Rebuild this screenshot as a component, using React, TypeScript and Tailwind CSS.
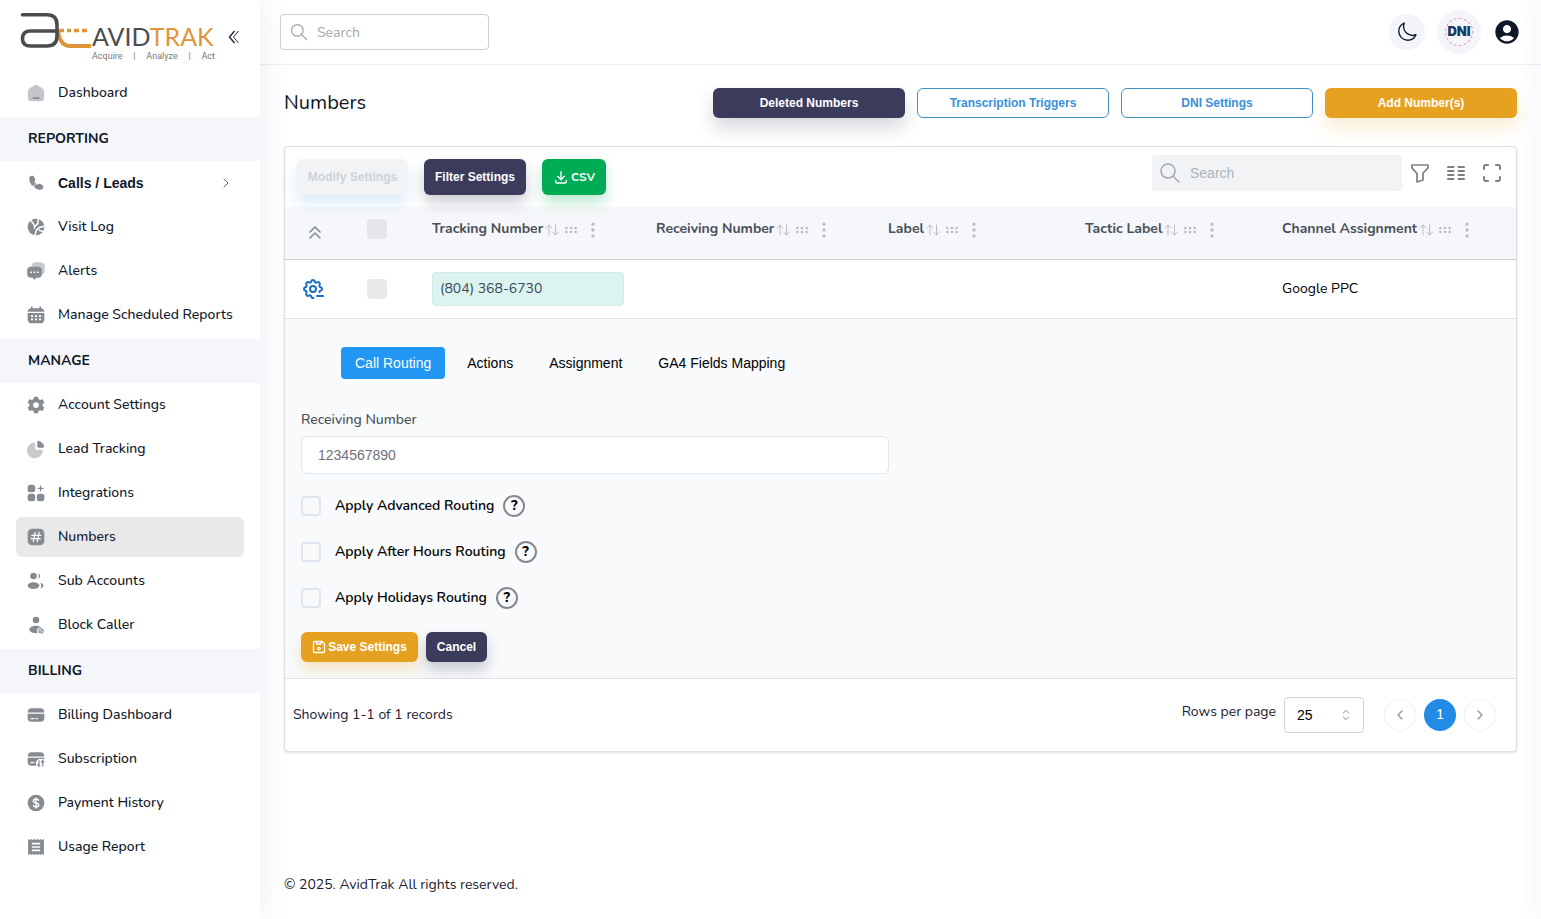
import type { ReactNode } from 'react';
import { HiOutlineMoon } from 'react-icons/hi2';
import { MdAccountCircle } from 'react-icons/md';
import {
  TbChevronLeft,
  TbChevronRight,
  TbChevronsUp,
  TbColumns,
  TbDotsVertical,
  TbDownload,
  TbFilter,
  TbGripHorizontal,
  TbMaximize,
  TbSearch,
  TbSelector,
  TbSettingsMinus,
} from 'react-icons/tb';

type NavItem = { label: string; icon: ReactNode; active?: boolean; expandable?: boolean };
type NavSection = { title?: string; items: NavItem[] };

function Glyph({ children }: { children: ReactNode }) {
  return (
    <svg viewBox="0 0 24 24" className="size-5 shrink-0 fill-[#868b91]" aria-hidden="true">
      {children}
    </svg>
  );
}

const sections: NavSection[] = [
  {
    items: [
      {
        label: 'Dashboard',
        icon: (
          <Glyph>
            <path fill="#c4c5ca" d="M10.4 2.6a3 3 0 0 1 3.2 0l6 3.8A4 4 0 0 1 21.800 9.800V18a4 4 0 0 1-4 4H6.200a4 4 0 0 1-4-4V9.800a4 4 0 0 1 2.200-3.400z" />
            <rect x="8" y="17.200" width="8.500" height="2" rx="1" />
          </Glyph>
        ),
      },
    ],
  },
  {
    title: 'REPORTING',
    items: [
      {
        label: 'Calls / Leads',
        expandable: true,
        icon: (
          <Glyph>
            <path fill="#b4b7bb" d="M7 12.500c1 2 2.800 3.700 5 4.800l2.600-2.600-4.500-4.500z" />
            <path d="M4.700 4.300C6.500 2.800 8.800 3 9.900 5l.9 1.900c.7 1.500.2 2.700-.8 3.700-.7.900-.5 2 .2 3L7.400 15.500C4.300 11.700 2.900 6.500 4.700 4.300z" />
            <path d="M11.500 18.200c3 2.100 6.500 2.700 8.300 1 1.600-1.700 1.500-3.600-.3-4.700l-2-1.200c-1.300-.7-2.600-.4-3.500.6-.8.800-1.600 1-2.500.7L9.300 16.300z" />
          </Glyph>
        ),
      },
      {
        label: 'Visit Log',
        icon: (
          <Glyph>
            <circle cx="12" cy="12" r="10" />
            <path d="M5.500 3.500l5.300 7.700 3.400-3.200.7-6M10.800 11.200l-1 2.500M22 11l-5.500 1.200-4 3.300-1.800 6.500M15 15l2.500 1.800 3.500.4" fill="none" stroke="#fff" strokeWidth="1.800" />
          </Glyph>
        ),
      },
      {
        label: 'Alerts',
        icon: (
          <Glyph>
            <rect x="6.500" y="1.500" width="16" height="15" rx="5" fill="#c8c9cd" />
            <path d="M6 7h8.500a4.500 4.500 0 0 1 4.500 4.500v4a4.500 4.500 0 0 1-4.500 4.500h-2l-2.200 2.500L8 20H6a4.500 4.500 0 0 1-4.500-4.500v-4A4.500 4.500 0 0 1 6 7z" />
            <path d="M5.200 13.500h2M9.300 13.500h2M13.400 13.500h2" stroke="#fff" strokeWidth="2" />
          </Glyph>
        ),
      },
      {
        label: 'Manage Scheduled Reports',
        icon: (
          <Glyph>
            <path d="M6 1.800h1.800v2h8.400v-2H18v2c2.400.2 3.800 1.700 4 4.200H2c.2-2.500 1.600-4 4-4.200zM2 9.500h20V17c0 3.300-1.700 5-5 5H7c-3.300 0-5-1.700-5-5z" />
            <path d="M6 13.300h2.500M10.800 13.300h2.500M15.600 13.300h2.500M6 17.300h2.500M10.800 17.300h2.500M15.600 17.300h2.500" stroke="#fff" strokeWidth="2" />
          </Glyph>
        ),
      },
    ],
  },
  {
    title: 'MANAGE',
    items: [
      {
        label: 'Account Settings',
        icon: (
          <Glyph>
            <path
              fillRule="evenodd"
              d="M9.700 2h4.600l.7 2.900 1.900 1.100 2.900-.9 2.200 4-2.100 2v2l2.100 2-2.200 4-2.900-.9-1.900 1.100-.7 2.700H9.700L9 19.300l-1.900-1.100-2.900.9-2.200-4 2.100-2v-2L2 9.100l2.200-4 2.900.9L9 4.900zM12 8.600a3.500 3.500 0 1 0 0 7 3.500 3.500 0 0 0 0-7z"
            />
          </Glyph>
        ),
      },
      {
        label: 'Lead Tracking',
        icon: (
          <Glyph>
            <path fill="#c8c9cd" d="M9 4.200c1.200-.3 2 .3 2 1.500V11c0 1.200.8 2 2 2h5.500c1.200 0 1.800.8 1.500 2A9.500 9.500 0 1 1 9 4.200z" />
            <path d="M13.500 4c0-1.300.9-2 2.100-1.700a9 9 0 0 1 6.100 6.200c.3 1.200-.4 2-1.600 2h-4.900c-1 0-1.700-.7-1.700-1.700z" />
          </Glyph>
        ),
      },
      {
        label: 'Integrations',
        icon: (
          <Glyph>
            <rect x="2" y="2" width="9" height="9" rx="3" />
            <rect x="2" y="13" width="9" height="9" rx="3" />
            <rect x="13" y="13" width="9" height="9" rx="3" />
            <path d="M17.500 3v7M14 6.500h7" stroke="#868b91" strokeWidth="1.500" />
          </Glyph>
        ),
      },
      {
        label: 'Numbers',
        active: true,
        icon: (
          <Glyph>
            <rect x="2" y="2" width="20" height="20" rx="5.500" />
            <path d="M11 6.500l-2.200 11M15.700 6.500l-2.200 11M7 10h11M6.200 14h11" fill="none" stroke="#fff" strokeWidth="1.400" strokeLinecap="round" />
          </Glyph>
        ),
      },
      {
        label: 'Sub Accounts',
        icon: (
          <Glyph>
            <circle cx="9" cy="6" r="4" />
            <ellipse cx="9" cy="17.500" rx="7" ry="4" />
            <path d="M14.500 2.600a3.600 3.600 0 0 1 0 6.800 7 7 0 0 0 0-6.800zM17.300 14c2.300.4 3.700 1.800 3.700 3.500s-1.400 3-3.700 3.500c1.300-2.200 1.300-4.800 0-7z" />
          </Glyph>
        ),
      },
      {
        label: 'Block Caller',
        icon: (
          <Glyph>
            <circle cx="12" cy="6" r="4" />
            <path d="M12 13c3 0 5.300 1 6.200 2.200a4 4 0 0 0-4.300 6.300c-5.500.8-9.900-1-9.900-4.000 0-2.500 3.500-4.500 8-4.500z" />
            <circle cx="18" cy="19" r="2.600" fill="none" stroke="#868b91" strokeWidth="1.300" />
            <path d="M16.500 20.500l3-3" stroke="#868b91" strokeWidth="1.300" />
          </Glyph>
        ),
      },
    ],
  },
  {
    title: 'BILLING',
    items: [
      {
        label: 'Billing Dashboard',
        icon: (
          <Glyph>
            <path d="M2 9c.2-3.500 1.500-5 5-5h10c3.500 0 4.800 1.500 5 5zM2 10.500h20V15c0 3.700-1.300 5-5 5H7c-3.700 0-5-1.300-5-5z" />
            <path d="M5.500 16.300H10M11.500 16.300H14" stroke="#fff" strokeWidth="1.500" />
          </Glyph>
        ),
      },
      {
        label: 'Subscription',
        icon: (
          <Glyph>
            <path d="M2 9c.2-3.500 1.500-5 5-5h10c3.500 0 4.800 1.500 5 5zM2 10.500h20v1.500h-7l-3 3v5H7c-3.700 0-5-1.300-5-5z" />
            <path d="M5.500 16.300H10" stroke="#fff" strokeWidth="1.500" />
            <path d="M15.500 13.500v7l-2-2M15.500 20.500l1.500-1.500M20 21v-7l-1.800 2M20 14l1.800 2" fill="none" stroke="#868b91" strokeWidth="1.500" />
          </Glyph>
        ),
      },
      {
        label: 'Payment History',
        icon: (
          <Glyph>
            <circle cx="12" cy="12" r="10" />
            <path d="M15.200 9.300c-.3-1.400-1.500-2.200-3.200-2.200-1.900 0-3.200 1-3.200 2.400 0 3.300 6.500 1.600 6.500 5 0 1.400-1.300 2.400-3.300 2.400-1.800 0-3-.8-3.300-2.300M12 5.300v13.400" fill="none" stroke="#fff" strokeWidth="1.700" />
          </Glyph>
        ),
      },
      {
        label: 'Usage Report',
        icon: (
          <Glyph>
            <path d="M2.500 2.500l1.900 1.200 1.900-1.200 1.900 1.200 1.900-1.200L12 3.700l1.900-1.200 1.900 1.200 1.900-1.200 1.900 1.200 1.900-1.200v19l-1.900-1.200-1.900 1.200-1.900-1.200-1.900 1.200-1.900-1.200-1.900 1.200-1.900-1.200-1.900 1.200-1.900-1.200-1.900 1.200z" />
            <path d="M7 8h10M7 12h10M7 16h10" stroke="#fff" strokeWidth="2" />
          </Glyph>
        ),
      },
    ],
  },
];

const columns = ['Tracking Number', 'Receiving Number', 'Label', 'Tactic Label', 'Channel Assignment'];
const tabs = ['Call Routing', 'Actions', 'Assignment', 'GA4 Fields Mapping'];
const routingOptions = ['Apply Advanced Routing', 'Apply After Hours Routing', 'Apply Holidays Routing'];

function Logo() {
  return (
    <div className="flex">
      <svg viewBox="0 0 72 38" className="h-[38px] w-[72px]" fill="none" aria-hidden="true">
        <path d="M38 18C39 28 42 34 50 34H71" stroke="#e0953a" strokeWidth="3.800" />
        <path d="M39 18.500H44M47 18.500H51M54 18.500H59M62 18.500H67" stroke="#e0953a" strokeWidth="3.500" />
        <path d="M2.500 2.800H27Q37 2.800 37 13V24Q37 34 27 34H10.500Q2.500 34 2.500 26.700Q2.500 19 10.500 19H36" stroke="#4c4c4e" strokeWidth="3.600" strokeLinecap="round" />
      </svg>
      <div className="w-[123px] pt-3">
        <div className="font-['Lato'] text-[25px] leading-6 text-[#4c4c4e]">
          AVID<span className="text-[#e0953a]">TRAK</span>
        </div>
        <div className="flex justify-between pt-1 font-['Roboto'] text-[9px] leading-2 text-[#77787b]">
          <span>Acquire</span>
          <span>|</span>
          <span>Analyze</span>
          <span>|</span>
          <span>Act</span>
        </div>
      </div>
    </div>
  );
}

function DoubleChevron() {
  return (
    <svg viewBox="0 0 12 14" className="h-3.5 w-3" fill="none" stroke="#2a2f45" aria-hidden="true">
      <path d="M6.500 1L1.500 7l5 6" strokeWidth="1.500" />
      <path d="M10.500 1L5.500 7l5 6" strokeWidth="1" />
    </svg>
  );
}

function SortArrows() {
  return (
    <svg viewBox="0 0 14 12" className="h-3 w-3.5" fill="none" stroke="currentColor" strokeLinecap="round" aria-hidden="true">
      <path d="M4 11V1M1 4l3-3 3 3M10.500 1v10M7.500 8l3 3 3-3" />
    </svg>
  );
}

function SaveIcon() {
  return (
    <svg viewBox="0 0 14 14" className="size-3.5" fill="none" stroke="currentColor" strokeWidth="1.300" aria-hidden="true">
      <path d="M1.500 2.500a1 1 0 0 1 1-1h7.700l2.300 2.300v7.700a1 1 0 0 1-1 1h-9a1 1 0 0 1-1-1z" />
      <path d="M4.500 1.500V4h4.500V1.500" />
      <circle cx="7" cy="8.500" r="1.200" />
    </svg>
  );
}

function Sidebar() {
  return (
    <aside className="z-10 w-[260px] shrink-0 bg-white shadow-[0_0_28px_rgba(82,63,145,0.1)]">
      <div className="flex h-[71px] items-start justify-between pt-3 pr-5 pl-5">
        <Logo />
        <button type="button" aria-label="Collapse menu" className="mt-[18px]">
          <DoubleChevron />
        </button>
      </div>
      <nav>
        {sections.map((section) => (
          <div key={section.title ?? 'main'}>
            {section.title && (
              <h2 className="flex h-11 items-center bg-[#f4f6fa] px-7 text-sm font-bold text-[#0f1729]">{section.title}</h2>
            )}
            <ul className="px-4 pt-0.5">
              {section.items.map((item) => (
                <li key={item.label} className="mb-1">
                  {item.expandable ? (
                    <button
                      type="button"
                      className="flex h-10 w-full items-center gap-3 rounded-md px-2.5 text-left font-['Liberation_Sans'] text-sm font-bold text-[#0f1729]"
                    >
                      {item.icon}
                      <span className="flex-1">{item.label}</span>
                      <TbChevronRight className="size-4 text-[#5c6270]" strokeWidth={1.5} />
                    </button>
                  ) : (
                    <a
                      href="#"
                      className={`flex h-10 items-center gap-3 rounded-md px-2.5 text-sm font-medium text-[#0f1729] ${item.active ? 'bg-[#e9e9e9]' : ''}`}
                    >
                      {item.icon}
                      <span className="whitespace-nowrap">{item.label}</span>
                    </a>
                  )}
                </li>
              ))}
            </ul>
          </div>
        ))}
      </nav>
    </aside>
  );
}

function Topbar() {
  return (
    <header className="flex h-[65px] items-center justify-between border-b border-[#eef0f4] pr-5 pl-5">
      <label className="flex h-9 w-[209px] items-center gap-2 rounded border border-[#ced0d4] bg-white px-2">
        <TbSearch className="size-5 shrink-0 text-[#a3a7ad]" strokeWidth={1.5} />
        <input
          type="search"
          aria-label="Search"
          placeholder="Search"
          className="w-full min-w-0 pt-0.5 text-sm outline-none placeholder:text-[#a3a7ad]"
        />
      </label>
      <div className="flex items-center">
        <button type="button" aria-label="Dark mode" className="flex size-9 items-center justify-center rounded-full bg-[#f4f5fa] text-[#0f1729]">
          <HiOutlineMoon className="size-[22px]" />
        </button>
        <button type="button" className="ml-3 flex size-11 items-center justify-center rounded-full bg-[#f4f5fa]">
          <span className="flex size-7 items-center justify-center rounded-full border border-dashed border-[#dfa08a] font-['Inter'] text-[13px] font-black text-[#173a5e]">
            DNI
          </span>
        </button>
        <button type="button" aria-label="Account" className="ml-3 text-[#0f1729]">
          <MdAccountCircle className="size-7" />
        </button>
      </div>
    </header>
  );
}

function TableToolbar() {
  return (
    <div className="flex items-start justify-between pt-2 pr-1.5 pb-3 pl-3">
      <div className="flex gap-4 pt-1 font-['Liberation_Sans'] text-xs font-bold">
        <button type="button" disabled className="h-9 w-[111px] rounded-md bg-[#f1f3f5] text-[#ced4da] shadow-[0_8px_14px_rgba(34,139,230,0.16)]">
          Modify Settings
        </button>
        <button type="button" className="h-9 w-[102px] rounded-md bg-[#3b3c5c] text-white shadow-[0_8px_14px_rgba(59,60,92,0.25)]">
          Filter Settings
        </button>
        <button
          type="button"
          className="flex h-9 w-16 items-center justify-center gap-0.5 rounded-md bg-[#00ab55] font-['Nunito','Open_Sans',sans-serif] text-xs font-bold text-white shadow-[0_8px_14px_rgba(0,171,85,0.25)]"
        >
          <TbDownload className="size-4" />
          CSV
        </button>
      </div>
      <div className="flex text-[#7b8087]">
        <label className="flex h-9 w-[250px] items-center gap-2 rounded bg-[#f1f3f5] px-1.5">
          <TbSearch className="size-6 shrink-0 text-[#a3a8ae]" strokeWidth={1.5} />
          <input
            type="search"
            aria-label="Search numbers"
            placeholder="Search"
            className="w-full min-w-0 font-['Liberation_Sans'] text-sm outline-none placeholder:text-[#adb5bd]"
          />
        </label>
        <button type="button" aria-label="Show filters" className="flex size-9 items-center justify-center">
          <TbFilter className="size-6" strokeWidth={1.7} />
        </button>
        <button type="button" aria-label="Show columns" className="flex size-9 items-center justify-center">
          <TbColumns className="size-6" />
        </button>
        <button type="button" aria-label="Full screen" className="flex size-9 items-center justify-center">
          <TbMaximize className="size-6" />
        </button>
      </div>
    </div>
  );
}

function RoutingPanel() {
  return (
    <div className="px-4 pt-7 pb-4">
      <div role="tablist" className="flex gap-2 pl-10 font-['Liberation_Sans'] text-sm text-black">
        {tabs.map((tab, i) => (
          <button
            key={tab}
            type="button"
            role="tab"
            aria-selected={i === 0}
            className={`h-8 rounded px-3.5 ${i === 0 ? 'bg-[#2196f3] text-white' : ''}`}
          >
            {tab}
          </button>
        ))}
      </div>
      <div className="mt-[31px] grid grid-cols-2 gap-6">
        <div>
          <label htmlFor="receiving" className="block text-sm font-medium text-[#495057]">
            Receiving Number
          </label>
          <input
            id="receiving"
            type="text"
            defaultValue="1234567890"
            className="mt-1.5 block h-[38px] w-full rounded-md border border-[#e0e6ed] bg-white px-4 font-['Liberation_Sans'] text-sm text-[#6c727c]"
          />
        </div>
      </div>
      <div className="mt-[21px] space-y-6">
        {routingOptions.map((option) => (
          <div key={option} className="flex h-[22px] items-center">
            <label className="flex items-center gap-3.5 text-sm font-semibold text-black">
              <input type="checkbox" className="size-5 appearance-none rounded border-2 border-[#e0e6ed]" />
              <span>{option}</span>
            </label>
            <button
              type="button"
              aria-label={`About ${option}`}
              className="ml-[9px] flex size-[22px] items-center justify-center rounded-full border-2 border-[#85888d] text-sm leading-none font-extrabold text-black"
            >
              ?
            </button>
          </div>
        ))}
      </div>
      <div className="mt-[23px] flex gap-2 font-['Liberation_Sans'] text-xs font-bold text-white">
        <button
          type="button"
          className="flex h-[30px] w-[117px] items-center justify-center gap-0.5 rounded-md bg-[#e7a121] shadow-[0_8px_14px_rgba(231,161,33,0.25)]"
        >
          <SaveIcon />
          Save Settings
        </button>
        <button type="button" className="h-[30px] w-[61px] rounded-md bg-[#3b3c5c] shadow-[0_8px_14px_rgba(59,60,92,0.25)]">
          Cancel
        </button>
      </div>
    </div>
  );
}

function NumbersTable() {
  return (
    <div className="overflow-x-auto">
      <table className="w-full min-w-[1100px] table-fixed text-left text-sm">
        <colgroup>
          <col className="w-[60px]" />
          <col className="w-[71px]" />
          <col className="w-[224px]" />
          <col className="w-[232px]" />
          <col className="w-[197px]" />
          <col className="w-[197px]" />
          <col />
        </colgroup>
        <thead>
          <tr className="h-[52px] border-b border-[#ced0d4] bg-[#f6f7fa] align-top text-[#495057]">
            <th className="pt-3.5">
              <button type="button" aria-label="Collapse all" className="mx-auto block text-[#8a9097]">
                <TbChevronsUp className="size-6" strokeWidth={1.7} />
              </button>
            </th>
            <th className="pt-3 pl-[22px]">
              <input type="checkbox" aria-label="Select all" className="block size-5 appearance-none rounded bg-[#e4e6e9]" />
            </th>
            {columns.map((name) => (
              <th key={name} className="pt-[11px] pl-4 font-bold whitespace-nowrap">
                <div className="flex items-center">
                  <span>{name}</span>
                  <span className="flex items-center pt-0.5 text-[#b9bdc3]">
                    <button type="button" aria-label={`Sort by ${name}`} className="ml-0.5">
                      <SortArrows />
                    </button>
                    <button type="button" aria-label={`Move ${name}`} className="ml-1">
                      <TbGripHorizontal className="size-4" />
                    </button>
                    <button type="button" aria-label={`${name} actions`} className="ml-1">
                      <TbDotsVertical className="size-5" />
                    </button>
                  </span>
                </div>
              </th>
            ))}
          </tr>
        </thead>
        <tbody>
          <tr className="h-[59px] border-b border-[#dee2e6]">
            <td>
              <button type="button" aria-label="Edit settings" className="ml-4 block text-[#1c6cc4]">
                <TbSettingsMinus className="size-6" />
              </button>
            </td>
            <td className="pl-[22px]">
              <input type="checkbox" aria-label="Select row" className="block size-5 appearance-none rounded bg-[#e9e9ea]" />
            </td>
            <td className="pl-4">
              <div className="flex h-[34px] w-48 items-center rounded border border-[#d3ebe7] bg-[#dcf4f0] px-[7px] text-[#3b4a59]">(804) 368-6730</div>
            </td>
            <td />
            <td />
            <td />
            <td className="pl-4 text-black">Google PPC</td>
          </tr>
          <tr className="border-b border-[#dee2e6] bg-[#f8fafc]">
            <td colSpan={7} className="p-0">
              <RoutingPanel />
            </td>
          </tr>
        </tbody>
      </table>
    </div>
  );
}

function TableFooter() {
  return (
    <div className="flex items-start justify-between pt-[18px] pr-5 pb-[18px] pl-2 text-sm text-[#1b2030]">
      <p className="pt-2">Showing 1-1 of 1 records</p>
      <div className="flex items-center">
        <label htmlFor="page-size" className="pb-1.5">
          Rows per page
        </label>
        <div className="relative ml-2">
          <select id="page-size" defaultValue="25" className="h-9 w-20 appearance-none rounded border border-[#ced4da] bg-white px-3 font-['Liberation_Sans'] text-sm text-black">
            <option>25</option>
            <option>50</option>
            <option>100</option>
          </select>
          <TbSelector className="pointer-events-none absolute top-2.5 right-2.5 size-4 text-[#868e96]" strokeWidth={1.5} />
        </div>
        <div className="ml-5 flex gap-2">
          <button type="button" aria-label="Previous page" className="flex size-8 items-center justify-center rounded-full border border-[#eff0f2] text-[#90959c]">
            <TbChevronLeft className="size-4" />
          </button>
          <button type="button" className="size-8 rounded-full bg-[#228be6] font-medium text-white">
            1
          </button>
          <button type="button" aria-label="Next page" className="flex size-8 items-center justify-center rounded-full border border-[#eff0f2] text-[#90959c]">
            <TbChevronRight className="size-4" />
          </button>
        </div>
      </div>
    </div>
  );
}

export default function App() {
  return (
    <div className="flex min-h-screen overflow-hidden bg-white font-['Nunito','Open_Sans',sans-serif]">
      <Sidebar />
      <div className="flex min-w-0 flex-1 flex-col">
        <Topbar />
        <main className="flex-1 px-6 pt-[23px]">
          <div className="flex items-start justify-between">
            <h1 className="text-xl leading-[30px] text-[#0f1729]">Numbers</h1>
            <div className="flex gap-3 font-['Liberation_Sans'] text-xs font-bold">
              <button type="button" className="h-[30px] w-48 rounded-md bg-[#3b3c5c] text-white shadow-[0_10px_18px_rgba(59,60,92,0.2)]">
                Deleted Numbers
              </button>
              <button type="button" className="h-[30px] w-48 rounded-md border border-[#3b93bf] bg-white text-[#3a8fdc]">
                Transcription Triggers
              </button>
              <button type="button" className="h-[30px] w-48 rounded-md border border-[#3b93bf] bg-white text-[#3a8fdc]">
                DNI Settings
              </button>
              <button type="button" className="h-[30px] w-48 rounded-md bg-[#e7a121] text-white shadow-[0_10px_18px_rgba(231,161,33,0.2)]">
                Add Number(s)
              </button>
            </div>
          </div>
          <section className="mt-7 rounded border border-[#dcdfe4] bg-white shadow-sm">
            <TableToolbar />
            <NumbersTable />
            <TableFooter />
          </section>
        </main>
        <footer className="px-6 pt-6 pb-6 text-sm text-[#1b2030]">© 2025. AvidTrak All rights reserved.</footer>
      </div>
      <div className="w-0 shrink-0 shadow-[0_0_20px_3px_rgba(82,63,145,0.12)]" />
    </div>
  );
}
